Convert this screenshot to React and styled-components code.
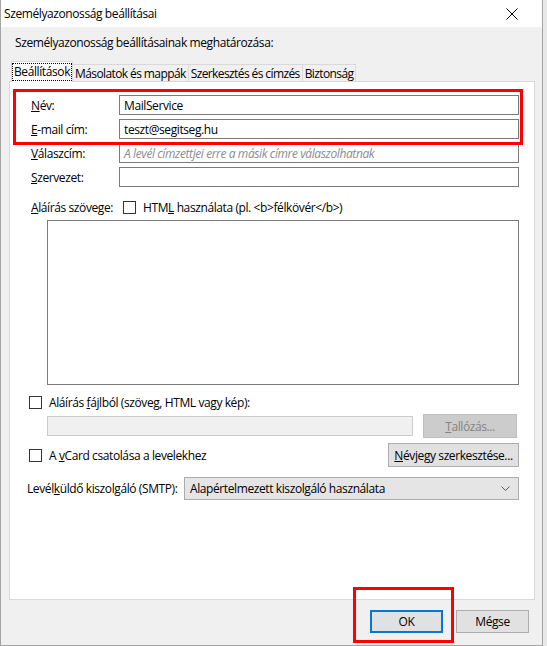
import React from "react";
import styled, { createGlobalStyle } from "styled-components";

const GlobalStyle = createGlobalStyle`
  html, body {
    margin: 0;
    padding: 0;
    background: #e8e8e8;
  }
  body {
    font-family: "Open Sans", "Noto Sans", "Liberation Sans", sans-serif;
    font-size: 12px;
    letter-spacing: -0.4px;
    color: #000;
  }
`;

const Window = styled.div`
  position: relative;
  width: 543px;
  height: 646px;
  box-sizing: border-box;
  border: 1px solid #a5a5a5;
  border-top: none;
  background: #f0f0f0;
  display: flex;
  flex-direction: column;
  overflow: hidden;
`;

const TitleBar = styled.div`
  height: 27px;
  background: #fff;
  display: flex;
  align-items: center;
  justify-content: space-between;
  padding-left: 3px;
  flex-shrink: 0;
`;

const TitleText = styled.span`
  font-size: 12px;
`;

const CloseBox = styled.div`
  width: 46px;
  height: 27px;
  display: flex;
  align-items: center;
  justify-content: center;
  margin-right: 7px;
`;

const Body = styled.div`
  flex: 1;
  display: flex;
  flex-direction: column;
  padding: 8px 7px 0 8px;
`;

const Intro = styled.div`
  padding-left: 6px;
  height: 16px;
  line-height: 16px;
`;

const TabRow = styled.div`
  display: flex;
  align-items: flex-end;
  margin-top: 9px;
  padding-left: 2px;
  height: 21px;
  position: relative;
  z-index: 1;
`;

const Tab = styled.div`
  height: ${(p) => (p.$active ? "21px" : "17px")};
  box-sizing: border-box;
  border: 1px solid #d9d9d9;
  border-bottom: none;
  background: ${(p) => (p.$active ? "#fff" : "#f0f0f0")};
  margin-bottom: ${(p) => (p.$active ? "-1px" : "0")};
  padding: ${(p) => (p.$active ? "1px 1px" : "0 2px")};
  display: flex;
  align-items: center;
  letter-spacing: -0.6px;
  white-space: nowrap;
  & + & {
    border-left: none;
  }
`;

const FocusLabel = styled.span`
  outline: 1px dotted #000;
  padding: 0 1px;
  line-height: 16px;
  letter-spacing: -0.4px;
`;

const Panel = styled.div`
  width: 526px;
  height: 519px;
  box-sizing: border-box;
  border: 1px solid #d9d9d9;
  background: #fff;
  padding: 13px 15px 0 21px;
  display: flex;
  flex-direction: column;
`;

const FormGrid = styled.div`
  display: grid;
  grid-template-columns: 88px 400px;
  row-gap: 4px;
  align-items: center;
`;

const Label = styled.label`
  white-space: nowrap;
  width: ${(p) => p.$width || "auto"};
  flex-shrink: 0;
`;

const TextBox = styled.div`
  height: 20px;
  box-sizing: border-box;
  border: 1px solid #7a7a7a;
  background: ${(p) => (p.$disabled ? "#f0f0f0" : "#fff")};
  border-color: ${(p) => (p.$disabled ? "#cccccc" : "#7a7a7a")};
  padding: 0 4px;
  display: flex;
  align-items: center;
  color: ${(p) => (p.$placeholder ? "#8c8c8c" : "#000")};
  font-style: ${(p) => (p.$placeholder ? "italic" : "normal")};
  white-space: nowrap;
  overflow: hidden;
  width: ${(p) => p.$width || "auto"};
`;

const SigRow = styled.div`
  display: flex;
  align-items: center;
  margin-top: 12px;
  height: 16px;
`;

const SigLabel = styled.span`
  width: 92px;
  white-space: nowrap;
`;

const Check = styled.span`
  width: 13px;
  height: 13px;
  box-sizing: border-box;
  border: 1px solid #333;
  background: #fff;
  flex-shrink: 0;
  margin-right: 7px;
`;

const CheckText = styled.span`
  white-space: nowrap;
`;

const SigArea = styled.div`
  margin: 5px 0 0 16px;
  width: 472px;
  height: 165px;
  box-sizing: border-box;
  border: 1px solid #7a7a7a;
`;

const CheckRow = styled.div`
  display: flex;
  align-items: center;
  justify-content: space-between;
  margin-top: ${(p) => p.$top || "0"};
  margin-left: -2px;
  height: ${(p) => p.$height || "16px"};
`;

const CheckGroup = styled.div`
  display: flex;
  align-items: center;
`;

const FileRow = styled.div`
  display: flex;
  align-items: center;
  margin: 4px 0 0 16px;
  gap: 10px;
  height: 24px;
`;

const Button = styled.div`
  height: ${(p) => p.$height || "24px"};
  width: ${(p) => p.$width};
  box-sizing: border-box;
  border: ${(p) => (p.$primary ? "2px solid #0078d7" : "1px solid #adadad")};
  background: ${(p) => (p.$disabled ? "#cccccc" : "#e1e1e1")};
  border-color: ${(p) =>
    p.$primary ? "#0078d7" : p.$disabled ? "#bfbfbf" : "#adadad"};
  color: ${(p) => (p.$disabled ? "#838383" : "#000")};
  display: flex;
  align-items: center;
  justify-content: center;
  white-space: nowrap;
`;

const SmtpRow = styled.div`
  display: flex;
  align-items: center;
  margin-top: 10px;
  margin-left: -4px;
  height: 23px;
`;

const Select = styled.div`
  width: 335px;
  height: 23px;
  box-sizing: border-box;
  border: 1px solid #acacac;
  background: #e5e5e5;
  display: flex;
  align-items: center;
  justify-content: space-between;
  padding: 0 8px 0 5px;
`;

const Footer = styled.div`
  display: flex;
  justify-content: flex-end;
  gap: 13px;
  padding: 10px 6px 0 0;
`;

const Marker = styled.div`
  position: absolute;
  border: 3px solid #ff0000;
  box-sizing: border-box;
  pointer-events: none;
`;

const CloseIcon = () => (
  <svg width="12" height="12" viewBox="0 0 12 12">
    <path d="M0.5 0.5 L11.5 11.5 M11.5 0.5 L0.5 11.5" stroke="#000" strokeWidth="1" fill="none" />
  </svg>
);

const Chevron = () => (
  <svg width="9" height="5" viewBox="0 0 9 5">
    <path d="M0.5 0.5 L4.5 4.5 L8.5 0.5" stroke="#5a5a5a" strokeWidth="1" fill="none" />
  </svg>
);

const tabs = ["Beállítások", "Másolatok és mappák", "Szerkesztés és címzés", "Biztonság"];

export default function App() {
  return (
    <>
      <GlobalStyle />
      <Window>
        <TitleBar>
          <TitleText>Személyazonosság beállításai</TitleText>
          <CloseBox>
            <CloseIcon />
          </CloseBox>
        </TitleBar>
        <Body>
          <Intro>Személyazonosság beállításainak meghatározása:</Intro>
          <TabRow>
            {tabs.map((t, i) => (
              <Tab key={t} $active={i === 0}>
                {i === 0 ? <FocusLabel>{t}</FocusLabel> : t}
              </Tab>
            ))}
          </TabRow>
          <Panel>
            <FormGrid>
              <Label><u>N</u>év:</Label>
              <TextBox>MailService</TextBox>
              <Label><u>E</u>-mail cím:</Label>
              <TextBox>teszt@segitseg.hu</TextBox>
              <Label><u>V</u>álaszcím:</Label>
              <TextBox $placeholder>A levél címzettjei erre a másik címre válaszolhatnak</TextBox>
              <Label><u>S</u>zervezet:</Label>
              <TextBox />
            </FormGrid>
            <SigRow>
              <SigLabel><u>A</u>láírás szövege:</SigLabel>
              <Check />
              <CheckText>HTM<u>L</u> használata (pl. &lt;b&gt;félkövér&lt;/b&gt;)</CheckText>
            </SigRow>
            <SigArea />
            <CheckRow $top="9px">
              <CheckGroup>
                <Check />
                <CheckText>Aláírás <u>f</u>ájlból (szöveg, HTML vagy kép):</CheckText>
              </CheckGroup>
            </CheckRow>
            <FileRow>
              <TextBox $disabled $width="366px" />
              <Button $disabled $width="94px"><u>T</u>allózás...</Button>
            </FileRow>
            <CheckRow $top="5px" $height="24px">
              <CheckGroup>
                <Check />
                <CheckText>A <u>v</u>Card csatolása a levelekhez</CheckText>
              </CheckGroup>
              <Button $width="131px"><u>N</u>évjegy szerkesztése...</Button>
            </CheckRow>
            <SmtpRow>
              <Label $width="157px">Levél<u>k</u>üldő kiszolgáló (SMTP):</Label>
              <Select>
                <span>Alapértelmezett kiszolgáló használata</span>
                <Chevron />
              </Select>
            </SmtpRow>
          </Panel>
          <Footer>
            <Button $primary $width="73px" $height="23px">OK</Button>
            <Button $width="73px" $height="23px">Mégse</Button>
          </Footer>
        </Body>
        <Marker style={{ left: 12, top: 89, width: 510, height: 56 }} />
        <Marker style={{ left: 352, top: 587, width: 101, height: 56 }} />
      </Window>
    </>
  );
}
